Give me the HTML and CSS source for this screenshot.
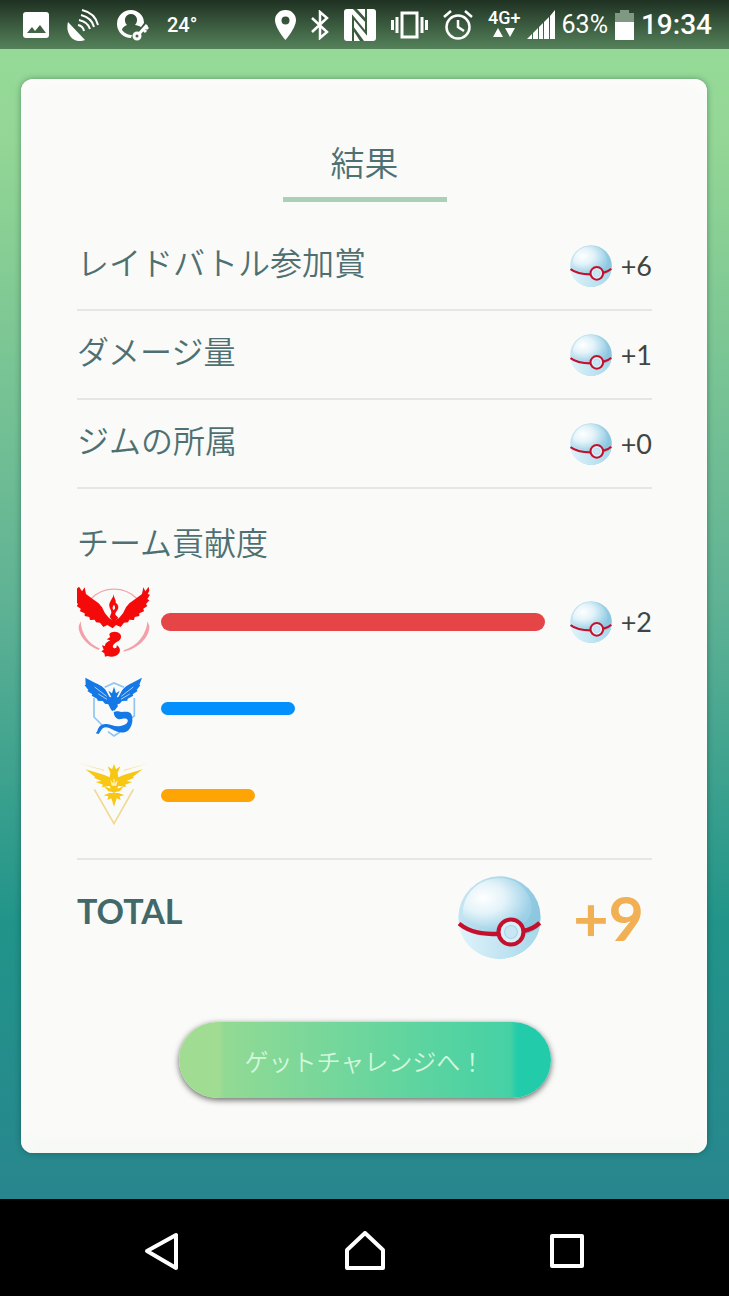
FILE: index.html
```html
<!doctype html>
<html lang="ja">
<head>
    <title>結果</title>
    <meta charset="utf-8">
    <meta name="viewport" content="width=device-width, initial-scale=1">
    <link rel="stylesheet" href="styles.css">
</head>
<body>
    <!-- shared ball artwork -->
    <svg class="defs" width="0" height="0" aria-hidden="true">
        <defs>
            <linearGradient id="ball-base" x1="0" y1="0" x2="1" y2="0.3">
                <stop offset="0" stop-color="#cfe9f4"/>
                <stop offset="0.6" stop-color="#a3d4e8"/>
                <stop offset="1" stop-color="#8cc6df"/>
            </linearGradient>
            <radialGradient id="ball-gloss" cx="0.3" cy="0.4" r="0.7">
                <stop offset="0" stop-color="#ffffff"/>
                <stop offset="0.45" stop-color="#e3f3f9"/>
                <stop offset="1" stop-color="#9bd0e6"/>
            </radialGradient>
            <linearGradient id="ball-low" x1="0" y1="0" x2="1" y2="0">
                <stop offset="0" stop-color="#e0f3fa"/>
                <stop offset="1" stop-color="#a6d8ea"/>
            </linearGradient>
        </defs>
        <symbol id="ball" viewBox="0 0 246 246">
            <circle cx="123" cy="123" r="122" fill="url(#ball-base)"/>
            <path d="M14 110C16 48 66 6 124 6c50 0 88 34 94 82 4 40-30 66-78 66C80 156 12 144 14 110z" fill="url(#ball-gloss)"/>
            <path d="M2 142c34 32 76 34 118 32h74c20-4 36-12 49-28-8 60-62 99-120 99S10 204 2 142z" fill="url(#ball-low)"/>
            <path d="M3 141c34 28 72 31 118 31M193 163c18-3 34-10 49-24" fill="none" stroke="#c4102c" stroke-width="13"/>
            <circle cx="157" cy="166" r="37" fill="#d8eff7" stroke="#c4102c" stroke-width="12"/>
            <circle cx="157" cy="166" r="19" fill="#c8e6f3" stroke="#a6d5e8" stroke-width="3"/>
        </symbol>
    </svg>

    <header class="status">
        <div class="notifications">
            <svg width="26" height="26" viewBox="0 0 26 26"><path fill="#fff" fill-rule="evenodd" d="M3 0h20a3 3 0 0 1 3 3v20a3 3 0 0 1-3 3H3a3 3 0 0 1-3-3V3a3 3 0 0 1 3-3zM4 21h19l-6-8-5 6-3-4z"/></svg>
            <svg width="32" height="32" viewBox="0 0 32 32">
                <path fill="#fff" d="M1 13l17 18C10 34 4 30 2 25 0 21 0 17 1 13z"/>
                <path fill="none" stroke="#fff" stroke-width="2" d="M11 16q5 1 6 6M12 11q9 2 11 9M14 6q11 3 13 12M15 1q13 3 16 15"/>
            </svg>
            <svg width="32" height="32" viewBox="0 0 32 32">
                <path fill="#fff" fill-rule="evenodd" d="M14 1a13 13 0 0 1 13 13l-3 4c-2-1-4-2-6-2 4-4 2-11-4-11s-8 7-4 11c-3 1-5 3-5 5 3 4 7 5 10 5l-1 3A13 13 0 1 1 14 1z"/>
                <circle cx="20" cy="27" r="3" fill="none" stroke="#fff" stroke-width="3"/>
                <path fill="none" stroke="#fff" stroke-width="3" d="M22 25l8-9M26 20l3 3M28 17l3 3"/>
            </svg>
            <span class="temperature">24°</span>
        </div>
        <div class="indicators">
            <svg width="21" height="30" viewBox="0 0 21 30"><path fill="#fff" fill-rule="evenodd" d="M10.5 0C17 0 21 5 21 10c0 8-10.500 20-10.500 20S0 18 0 10C0 5 4 0 10.500 0zm0 6.500a4 4 0 1 0 0 8 4 4 0 1 0 0-8z"/></svg>
            <svg width="18" height="30" viewBox="0 0 18 30"><path fill="none" stroke="#fff" stroke-width="2.500" d="M1 8l15 14-7 6V2l7 6L1 22"/></svg>
            <svg width="32" height="32" viewBox="0 0 32 32">
                <rect width="32" height="32" rx="3" fill="#fff"/>
                <path fill="none" stroke="#3c5c40" stroke-width="2" d="M9 32V8l13 16V0"/>
                <path fill="#3c5c40" d="M9 0h4l10 11v4zM9 17l11 15h-4L9 21z"/>
            </svg>
            <svg width="37" height="28" viewBox="0 0 37 28"><path fill="none" stroke="#fff" stroke-width="3" d="M11 2h15v24H11zM6 6v16M31 6v16M1.500 9v10M35.500 9v10"/></svg>
            <svg width="30" height="30" viewBox="0 0 30 30">
                <circle cx="15" cy="17" r="11.500" fill="none" stroke="#fff" stroke-width="2.500"/>
                <path fill="none" stroke="#fff" stroke-width="2.500" d="M15 10v7l6 4M1 7l7-6M29 7l-7-6"/>
            </svg>
            <div class="network">
                <span>4G+</span>
                <svg width="22" height="9" viewBox="0 0 22 9"><path fill="#fff" d="M0 9l5-9 5 9zM12 0h10l-5 9z"/></svg>
            </div>
        </div>
        <div class="power">
            <svg width="28" height="29" viewBox="0 0 28 29"><path fill="#fff" d="M0 29l5-5v5zM6 23l5-5v11H6zM12 17l4-4v16h-4zM17 12l5-5v22h-5zM23 6l5-6v29h-5z"/></svg>
            <span class="charge">63%</span>
            <svg width="19" height="30" viewBox="0 0 19 30"><path fill="#7f9882" d="M5 0h9v3h5v9H0V3h5z"/><path fill="#fff" d="M0 12h19v18H0z"/></svg>
            <time>19:34</time>
        </div>
    </header>

    <main>
        <section class="card">
            <h1>結果</h1>

            <ul class="rewards">
                <li><span class="label">レイドバトル参加賞</span><span class="reward"><svg class="ball"><use href="#ball"/></svg>+6</span></li>
                <li><span class="label">ダメージ量</span><span class="reward"><svg class="ball"><use href="#ball"/></svg>+1</span></li>
                <li><span class="label">ジムの所属</span><span class="reward"><svg class="ball"><use href="#ball"/></svg>+0</span></li>
            </ul>

            <h2>チーム貢献度</h2>
            <ul class="teams">
                <li>
                    <svg class="emblem" viewBox="51 12 222 261">
                        <path fill="none" stroke="#f4a5ac" stroke-width="4" d="M93 74a98 98 0 0 1 138 0"/>
                        <path fill="#f4a0aa" d="M62 142c2 38 24 68 58 82l-4 4c-38-14-62-48-60-72zM262 142c-2 38-30 76-70 86l-2 5c46-8 80-46 78-77z"/>
                        <g fill="#f50a0a">
                            <path d="M57 38l9 14 8-12 4 20 16 12 22 16 10 12 9 18 12 14 15 9 15-9 12-14 9-18 10-12 22-16 16-12 4-20 6 12 10-14 2 12-5 10 7 2-8 13 6 4-10 11 4 6-12 8 2 8-14 6v8l-14 3-2 9-14-1-4 8-12 1-10 13-14-6-10 10-16-10-12 6-10-13-12-1-4-8-14 1-2-9-14-3v-8l-14-6 2-8-12-8 4-6-10-11 6-4-8-13 7-2-5-10z"/>
                            <path d="M161 61c-2 14-15 22-13 36 1 8 7 12 6 20l-5 12 12 16 14-14-9-9c-1-9 9-12 9-23 0-6-4-10-8-13 2-8-5-12-6-25z"/>
                            <path d="M148 180c8-10 28-8 34 2 4 12-4 18-12 22-9 6-14 12-10 17 5 5 12 0 10-7 9 4 13 16 7 24-6 9-22 13-34 8l-8 2-2-10-9-6 7-5-5-13 9 2c1-10 8-12 16-17l-11-3 10-6z"/>
                        </g>
                        <path fill="#fafbf8" d="M162 92c-5 7-6 11-1 17 6-5 5-11 1-17z"/>
                    </svg>
                    <div class="track"><div class="bar valor" style="width: 100%"></div></div>
                    <span class="reward"><svg class="ball"><use href="#ball"/></svg>+2</span>
                </li>
                <li>
                    <svg class="emblem" viewBox="51 3 222 261">
                        <path fill="none" stroke="#8fc4f3" stroke-width="5" d="M134 70l28-13 30 13M102 102v57l24 24M144 203l18 13 18-12M210 164l13-8v-54"/>
                        <g fill="#1478e6">
                            <path d="M76 41l30 16c20 8 32 18 38 34l5 8 5 1-9-20 11 8 6-20 6 20 11-8-9 20 5-1 5-8c6-16 18-26 36-34l30-16-8 21 3 2-11 14 3 3-15 10 2 4-17 9-1 6-16 1-7 8-10 2-7 14-5 7-5-7-7-14-10-2-7-8-15-1-2-6-16-9 2-4-15-10 3-3-11-14 3-2z"/>
                            <path d="M151 110h22v18l-11 13-11-13z"/>
                            <path d="M161 145c10-6 15-2 24-1 14-1 25-1 29 7 6 14 4 34-8 47-14 13-34 8-50-2-14-8-26-9-32 2l-8 12-9-2 5-6c2-14 13-24 28-22 14 1 25 10 42 6 14-3 23-9 21-18-6-10-18 0-29-3-8-3-12-9-13-20z"/>
                        </g>
                        <path fill="none" stroke="#fafbf8" stroke-width="2" d="M104 69l36 28M220 69l-36 28M115 90l26 16M209 90l-26 16"/>
                    </svg>
                    <div class="track"><div class="bar mystic" style="width: 35%"></div></div>
                </li>
                <li>
                    <svg class="emblem" viewBox="51 9 222 261">
                        <path fill="#f7e3a1" d="M56 42l76 20v4zM268 42l-76 20v4z"/>
                        <path fill="none" stroke="#f1d991" stroke-width="5" d="M103 121l59 103 58-103"/>
                        <g fill="#f8c714">
                            <path d="M76 61l55 16 18 8 2-13-8-20 13 9 6-16 6 16 13-9-8 20 2 13 18-8 55-16-29 22 3 3-22 10 17 3-22 8 4 7-24-3-8 18-5 3-5-3-8-18-24 3 4-7-22-8 17-3-22-10 3-3z"/>
                            <path d="M131 110c18 12 44 12 62 0l-14 17-17 3-17-3z"/>
                            <path d="M148 132h28l17 7-14 3 3 11-12-5-8 25-8-25-12 5 3-11-14-3z"/>
                        </g>
                        <path fill="#fff1b6" d="M151 92l9 12v-14h4v14l9-12-4 18h-14z"/>
                    </svg>
                    <div class="track"><div class="bar instinct" style="width: 24.5%"></div></div>
                </li>
            </ul>

            <div class="total">
                <strong>TOTAL</strong>
                <svg class="ball-large"><use href="#ball"/></svg>
                <span class="sum">+9</span>
            </div>

            <button class="challenge" type="button">ゲットチャレンジへ！</button>
        </section>
    </main>

    <nav>
        <button type="button" aria-label="Back"><svg width="40" height="40" viewBox="0 0 40 40"><path d="M33 4v33L4 20z"/></svg></button>
        <button type="button" aria-label="Home"><svg width="40" height="40" viewBox="0 0 40 40"><path d="M20 2L2 19v18h36V19z"/></svg></button>
        <button type="button" aria-label="Recent apps"><svg width="40" height="40" viewBox="0 0 40 40"><path d="M5 5h30v30H5z"/></svg></button>
    </nav>
</body>
</html>
```
FILE: styles.css
```css
* {
    box-sizing: border-box;
}

body {
    display: flex;
    flex-direction: column;
    min-height: 100vh;
    margin: 0;
    background: #000;
    color: #4f7072;
    font-family: Lato, 'Noto Sans CJK JP', sans-serif;
}

svg {
    display: block;
    flex: none;
}

ul {
    list-style: none;
    margin: 0;
    padding: 0;
}

button {
    border: 0;
    cursor: pointer;
}

.defs {
    position: absolute;
}

/* status bar */

.status {
    display: flex;
    align-items: center;
    height: 49px;
    padding: 0 17px 0 23px;
    background: linear-gradient(#1f3122, #55825a);
    color: #fff;
    font-family: Roboto, sans-serif;
}

.notifications,
.indicators,
.power {
    display: flex;
    align-items: center;
}

.notifications {
    gap: 18px;
    margin-right: auto;
}

.indicators {
    gap: 15px;
    margin-right: 6px;
}

.power {
    gap: 7px;
}

.temperature {
    font-size: 20px;
    font-weight: 500;
}

.network {
    display: flex;
    flex-direction: column;
    align-items: center;
    padding-bottom: 4px;
    font-size: 18px;
    font-weight: 500;
    line-height: 20px;
}

.charge {
    font-size: 25px;
}

.status time {
    font-size: 28px;
    font-weight: 500;
}

/* result card */

main {
    flex: 1;
    padding: 30px 22px 46px 21px;
    background: linear-gradient(#96da98, #93d695 8%, #5fb294 48%, #219489 76%, #28868e);
}

.card {
    display: flex;
    flex-direction: column;
    padding: 60px 55px 55px 56px;
    border-radius: 12px;
    background: #fafbf8;
    box-shadow: 0 0 6px rgba(0, 50, 40, 0.4), inset 0 0 16px #fff, inset 0 -12px 16px -8px #edf1ea;
}

h1,
h2 {
    margin: 0;
    font-weight: 350;
    line-height: 48px;
}

h1 {
    align-self: center;
    padding: 0 48px 10px;
    border-bottom: 5px solid #aad1b7;
    font-size: 34px;
}

h2 {
    margin-top: 30px;
    font-size: 32px;
}

.rewards {
    margin-top: 20px;
    font-size: 32px;
    font-weight: 350;
}

.rewards li {
    display: flex;
    align-items: center;
    justify-content: space-between;
    height: 89px;
    border-bottom: 2px solid #e5e7e4;
}

.label {
    padding-bottom: 10px;
}

.reward {
    display: flex;
    align-items: center;
    justify-content: space-between;
    width: 82px;
    color: #424443;
    font-size: 27px;
    font-weight: 400;
}

.ball {
    width: 42px;
    height: 42px;
}

.teams {
    margin-top: 11px;
}

.teams li {
    display: grid;
    grid-template-columns: 74px 1fr 82px;
    align-items: center;
    height: 87px;
}

.emblem {
    width: 74px;
    height: 87px;
}

.track {
    margin: 0 25px 0 10px;
}

.bar {
    height: 13px;
    border-radius: 9px;
}

.valor {
    height: 18px;
    background: #e64547;
}

.mystic {
    background: #0390fc;
}

.instinct {
    background: #fea505;
}

.total {
    display: flex;
    align-items: center;
    margin-top: 19px;
    padding: 16px 8px 15px 0;
    border-top: 2px solid #e5e7e4;
}

.total strong {
    margin-right: auto;
    padding-bottom: 14px;
    color: #43686a;
    font-size: 34px;
}

.ball-large {
    width: 83px;
    height: 83px;
}

.sum {
    margin-left: 32px;
    color: #f1b053;
    font-size: 61px;
    font-weight: 700;
    line-height: 72px;
}

.challenge {
    align-self: center;
    width: 372px;
    max-width: 100%;
    height: 76px;
    margin-top: 48px;
    border-radius: 38px;
    background: linear-gradient(90deg, #a0dc92 0 11%, #92da94 12%, #45d1a5 89%, #22ccaa 91%);
    box-shadow: 0 2px 6px rgba(0, 0, 0, 0.6);
    color: #d3f8dc;
    font: 350 24px 'Noto Sans CJK JP', sans-serif;
}

/* navigation bar */

nav {
    display: flex;
    justify-content: center;
    gap: 162px;
    padding: 32px 0 25px;
}

nav button {
    padding: 0;
    background: none;
}

nav path {
    fill: none;
    stroke: #fff;
    stroke-width: 4;
    stroke-linejoin: round;
}
```
